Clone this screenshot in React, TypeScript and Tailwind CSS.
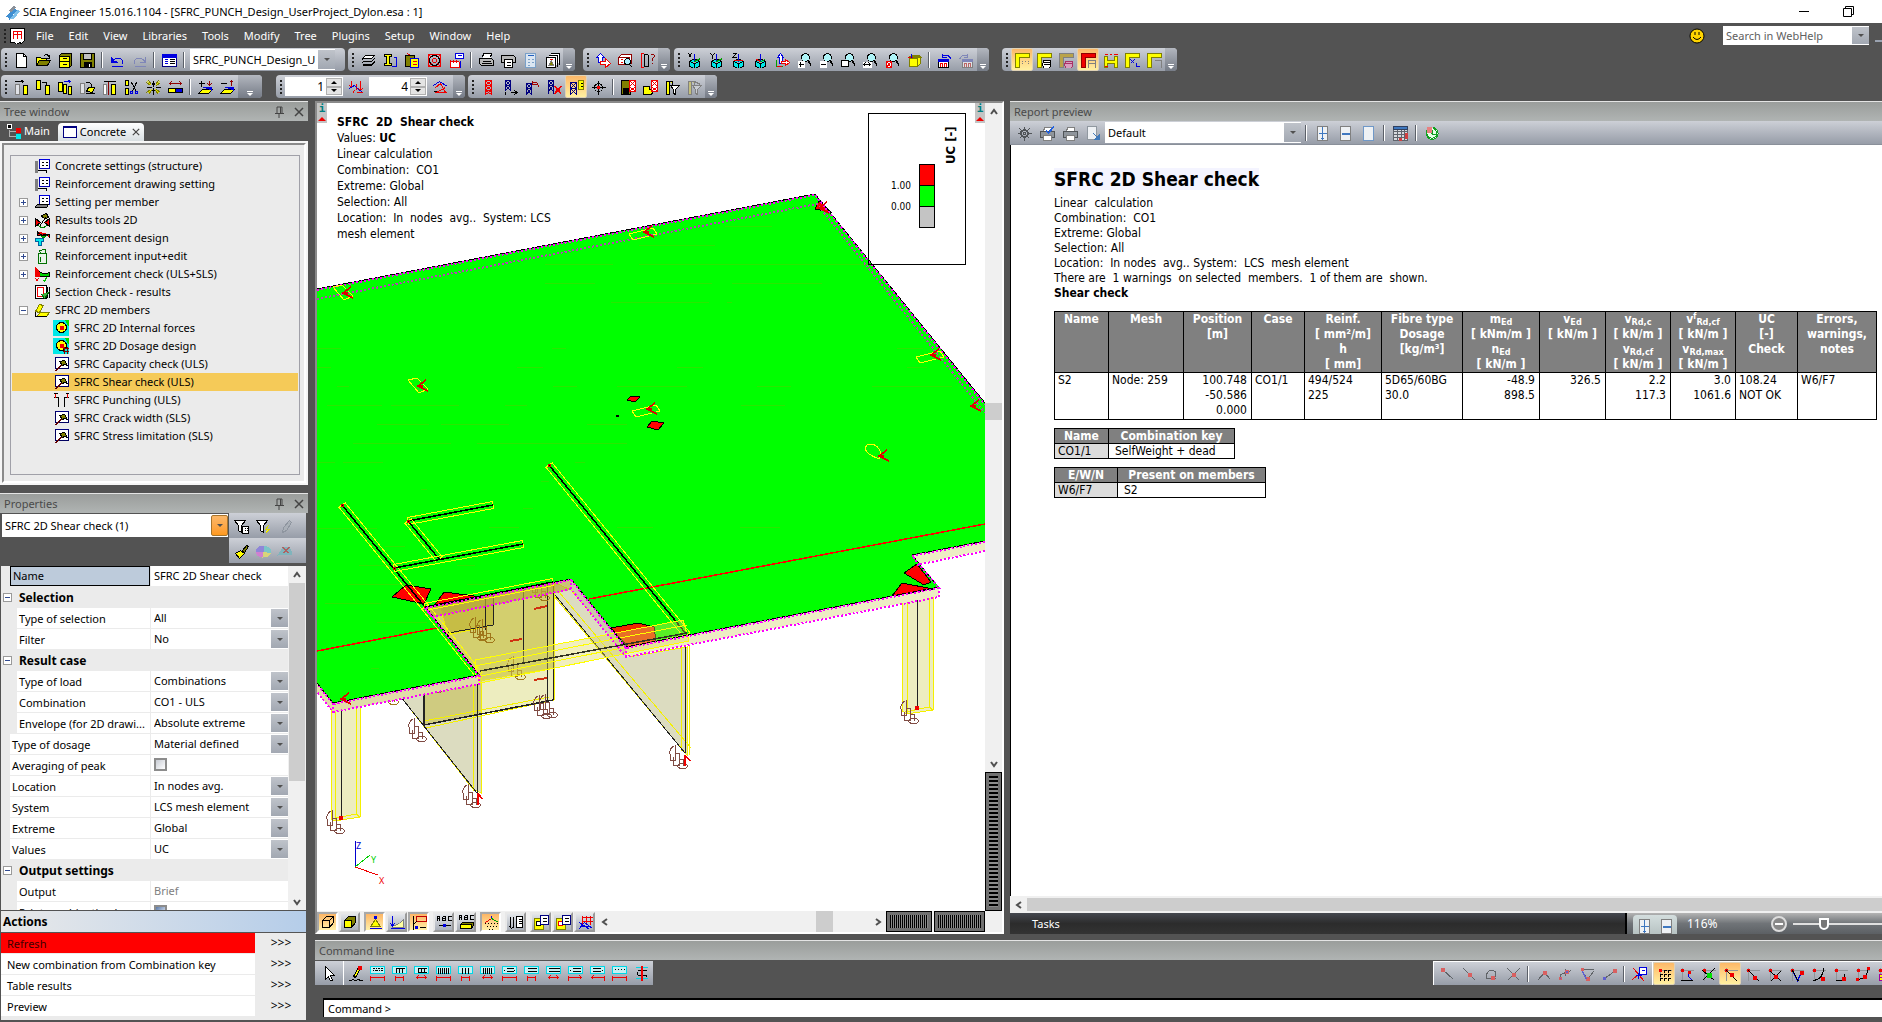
import { useState } from 'react';
import type { ReactNode } from 'react';

// Each icon is a list of [path, stroke, fill] on a 16x16 grid
type Shape = [string, string, string?];

const K = '#000';
const R = '#f00000';
const B = '#0000e0';
const Y = '#ffff00';
const C = '#00e8e8';
const O = '#808000';
const G = '#808080';
const W = '#fff';

const SHEETS = 'M2 6h9l3-3H5zM2 9h9l3-3M2 12h9l3-3M2 6v1M2 9v1';
const CUBE = 'M8 6l5 3v5l-5 2-5-2V9zM3 9l5 2 5-2M8 11v5';
const LENS = 'M5 5a4 4 0 1 0 8 0a4 4 0 1 0-8 0';
const HANDLE = 'M11 8l4 6M12 8l3 5';
const TRUSS = 'M5 1v14M11 1v14M5 1h6M5 6h6M5 11h6M5 1l6 5M11 1l-6 5M5 6l6 5M11 6l-6 5M5 11l6 4M11 11l-6 4';
const FRAME = 'M1 15V1h14v4H5v10z';

const ICONS: Record<string, Shape[]> = {
  app: [['M2 12L9 3l3 3-7 9z', 'none', '#3f8fd2'], ['M6 14l7-9 2 2-6 8z', 'none', '#7fc0ea'], ['M4 6l5-5 2 2-5 5z', 'none', '#8a9099']],
  doc: [['M1 0h14v12l-3 3-2-1-3 2-2-2H1z', K, W], ['M4 10V3h4v7M8 3h4v7M4 6h8', R]],
  new: [['M3 1h7l3 3v11H3z', K, W], ['M10 1v3h3', K]],
  open: [['M1 13V5h4l1 1h5v3', K, Y], ['M1 13l3-5h11l-3 5z', K, O], ['M9 3q3-2 4 1l1-1v3h-3', K]],
  cabinet: [['M2 3l2-2h10v12l-2 2H2z', K, O], ['M2 4h10v5H2zM2 9h10v6H2z', K, Y], ['M5 6h4M5 12h4', K]],
  save: [['M1 1h14v14H1z', K, O], ['M4 1h8v6H4z', K, '#c0c0c0'], ['M5 10h7v5H5z', K, K], ['M10 11v3', W]],
  undo: [['M2 4v6h6M2 10q4-6 9-4q4 3 1 6', B], ['M3 5v4h4', B], ['M2 14h11', B]],
  redo: [['M14 4v6H8M14 10q-4-6-9-4q-4 3-1 6', '#7f86b8'], ['M3 14h11', '#7f86b8']],
  form: [['M1 2h14v12H1z', '#000080', W], ['M1 2h14v3H1z', B, B], ['M3 7h3M3 9h3M3 11h3', B], ['M8 7h5M8 9h5M8 11h5', K]],
  sheets: [['M2 6h9l3-3H5z', K, W], [SHEETS, K], ['M2 13h9l3-3', K]],
  beam: [['M2 2h7v2H7v7h2v2H2v-2h2V4H2z', K, Y], ['M11 5h3v9h-5', B]],
  paste: [['M1 3h9v11H1z', K, O], ['M6 6h8v9H6z', B, Y], ['M3 1l3 2M8 9h4M8 12h4', R]],
  coil: [['M2 2h12v12H2z', R], ['M3 8a5 5 0 1 0 10 0a5 5 0 1 0-10 0', K], ['M6 8a2 2 0 1 0 4 0a2 2 0 1 0-4 0', R], ['M2 2l3 3M14 2l-3 3M2 14l3-3M14 14l-3-3', R]],
  mill: [['M7 1h8v5H7z', B, W], ['M2 15V8l3 2V8l3 2V8l3 2v5z', R, W], ['M9 3h4M12 8v7', B]],
  print: [['M4 5l1-4h8l-1 4', K, W], ['M1 6h12l2 2v5H3l-2-2z', K, '#b8b8b8'], ['M3 11h10M4 9h8', K]],
  plot: [['M1 3h12l2 2v5H1z', K, '#b8b8b8'], ['M4 7h8v8H4z', K, W], ['M6 10h4M6 13h4', K]],
  calc: [['M3 1h10v14H3z', '#7aa0c8', '#dbe6f2'], ['M5 3h6', '#2060c0'], ['M5 7h2M9 7h2M5 10h2M9 10h2M5 13h2', '#7aa0c8']],
  gallery: [['M6 1h9v11', K, W], ['M4 3h9v11', K, W], ['M2 5h9v10H2z', K, W], ['M4 13l3-5 2 5z', G, O], ['M5 7h3', R]],
  arrows: [['M5 1l4 4H7v5H3V5H1z', B, W], ['M5 9h5V6l5 5-5 4v-3H5z', R, W]],
  caseFind: [['M1 5l3-3h10v9H1z', '#900000', W], ['M1 5h11v7H1z', '#900000', W], ['M3 7h2M7 7h2M3 10h2', R], ['M7 9a3 3 0 1 0 6 0a3 3 0 1 0-6 0', K, '#aef'], ['M12 12l3 3', K]],
  measure: [['M2 1v14M1 1h3M1 15h3', R], ['M8 2H5v12h3M9 2v12', K], ['M11 3q3-3 4 0q0 2-2 3v2M13 10v1', '#900000']],
  cubeX: [[CUBE, K, C], ['M2 1l3 4M5 1L2 5', K], ['M8 1v8', B], ['M8 9l6-3', '#00a000']],
  cubeY: [[CUBE, K, C], ['M2 1l2 2 2-2M4 3v3', K], ['M8 1v8', B], ['M8 9l6-3', '#00a000']],
  cubeZ: [[CUBE, K, C], ['M2 1h4L2 5h4', K], ['M8 1v8', B], ['M3 8h9', R]],
  cubeA: [[CUBE, K, C], ['M8 1v8', B], ['M8 9l5-2', '#00a000'], ['M8 9L4 7', R]],
  ucs: [['M6 1l3 4H8v6H5V5H3z', B, W], ['M7 9h4V7l4 3-4 3v-2H7z', R, W], ['M2 7v7h6', '#00a000'], ['M2 14h5', R]],
  zoomIn: [[LENS, K, '#aef4f8'], [HANDLE, K], ['M1 8h7v7H1z', 'none', W], ['M2 12h5M4 9v5', K]],
  zoomOut: [[LENS, K, '#aef4f8'], [HANDLE, K], ['M1 8h7v7H1z', 'none', W], ['M2 12h5', K]],
  zoomWin: [[LENS, K, '#aef4f8'], [HANDLE, K], ['M1 8h7v6H1z', K, W]],
  zoomAll: [[LENS, K, '#aef4f8'], [HANDLE, K], ['M0 9h9v6H0z', 'none', W], ['M1 12h7M3 10l-2 2 2 2M6 10l2 2-2 2', K]],
  zoomSel: [[LENS, K, '#aef4f8'], [HANDLE, K], ['M2 9h5v6H2zM2 9l5 6M7 9l-5 6', R, W]],
  light: [['M3 6h8v8H3zM11 6l3-2v7l-3 3', O, Y], ['M2 5h13l-2-2H6z', O, O], ['M1 5h5', R], ['M5 1v4', B]],
  viewUndo: [['M2 7h10v8H2z', K, W], ['M2 7h10v2H2z', B, B], ['M4 14v-3h2v3M8 14v-3h2v3', R], ['M6 4q5-4 9 3M6 1v4h4', B]],
  viewRedo: [['M4 7h10v8H4z', G, '#dfe1e6'], ['M4 7h10v2H4z', '#7f86b8', '#7f86b8'], ['M6 14v-3h2v3M10 14v-3h2v3', '#b66'], ['M9 4q-5-4-8 3M9 1v4H5', '#7f86b8']],
  frame1: [[FRAME, O, Y], ['M7 9h1M10 9h1M13 9h1M7 11h1M13 11h1', G]],
  frame2: [[FRAME, O, Y], ['M7 8h7v6l-2 2H8l-2-3z', K, W], ['M7 10h6M7 12h6', K]],
  frame3: [[FRAME, G, '#b9a34a'], ['M7 9h7v5l-2 2H8l-2-3z', '#a36', '#d8a0c0'], ['M7 11h6', '#a36']],
  frame4: [[FRAME, '#900000', R], ['M8 15V8h7v7M8 11h7', G]],
  frame5: [['M2 15V4h3v4h7V4h3v11h-3v-4H5v4z', O, Y], ['M2 2h3M7 2h2M11 2h4M2 14h3', R]],
  frame6: [[FRAME, O, Y], ['M6 7l4 4M10 7l-4 4M12 10v4h3', B]],
  frame7: [[FRAME, O, Y], ['M8 8h7v7', G]],
  copyMove: [['M2 5h4v10H2z', G, '#dfe1e6'], ['M10 6h4v9h-4z', K, Y], ['M1 2h9M8 1l2 1-2 2', K]],
  copyMulti: [['M1 1h4v9H1z', K, Y], ['M10 6h4v9h-4z', K, Y], ['M6 3h5v3', K]],
  copyBlue: [['M1 3h4v9H1z', K, Y], ['M6 5h3v9H6zM11 7h3v8h-3z', K, Y], ['M6 2h7M11 1l2 1-2 2', B]],
  rotate: [['M1 4h4v10H1z', G, '#dfe1e6'], ['M7 12l2-4h6l-2 5z', K, Y], ['M7 3q5-1 5 4M6 14h9', K]],
  mirror: [['M2 5h3v10H2z', G, W], ['M10 5h4v10h-4z', K, Y], ['M7 1v14', '#900000'], ['M2 2h12', K]],
  cut: [['M2 1h3v5H2zM2 9h3v6H2z', K, Y], ['M8 3l5 9M13 3l-4 9', K], ['M7 12h2v2H7zM12 12h2v2h-2z', B]],
  explode: [['M3 1l3 4M13 1l-3 4M3 15l3-4M13 15l-3-4M1 3l4 3M15 3l-4 3M1 13l4-3M15 13l-4-3', O], ['M8 1v5M8 10v5M1 8h5M10 8h5M7 4l1 2 1-2M7 12l1-2 1 2', K], ['M2 2l4 4M14 2l-4 4M2 14l4-4M14 14l-4-4', '#e8e800']],
  stretch: [['M1 9h14v4H1z', K, Y], ['M8 9h7v4H8z', K, B], ['M2 4h12M4 2L2 4l2 2M12 2l2 2-2 2', '#900000']],
  layAdd: [['M1 14l4-4h10l-4 4z', K, Y], ['M5 8h9v3', B, B], ['M4 1v6M1 4h6', K], ['M12 1v5M10 4l2 2 2-2', '#900000']],
  laySub: [['M1 14l4-4h10l-4 4z', K, Y], ['M5 8h9v3', B, B], ['M1 4h6', K], ['M12 1v5M10 3l2-2 2 2', '#900000']],
  dimA: [['M3 1v7M1 6l2 2 2-2M8 4v6M12 1v10M10 9l2 2 2-2', R], ['M1 9l5-3 5 5 3 1', B], ['M8 13h6M4 14l2-3', R]],
  dimB: [['M1 6l6-4 8 5', B], ['M3 8l5-4 5 9M13 8L4 13h10', R], ['M1 12h3', K]],
  truss: [[TRUSS, R, W]],
  trussL: [['M3 1v10M8 1v10M3 1h5M3 6h5M3 1l5 5M8 1L3 6M3 6l5 5M8 6l-5 5', '#000080', W], ['M8 13h6M12 11l3 2-3 2M3 12v3', K]],
  trussU: [['M2 4v11M7 4v11M2 4h5M2 9h5M2 4l5 5M7 4L2 9M2 9l5 6M7 9l-5 6', '#000080', W], ['M8 4q5-4 6 4M8 1v4h4', '#a00000']],
  trussX: [['M2 1v13M7 1v13M2 1h5M2 6h5M2 1l5 5M7 1L2 6M2 6l5 6M7 6l-5 6', '#000080', W], ['M8 7l7 8M15 7l-7 8M9 7l6 7M14 7l-7 8', R]],
  trussY: [['M2 3v12M8 3v12M2 3h6M2 9h6M2 3l6 6M8 3L2 9M2 9l6 6M8 9l-6 6', '#000080', W], ['M10 1h5v9h-5z', O, Y], ['M12 4h2M12 7h2', K]],
  target: [['M8 1v14M1 8h14', K], ['M4 8a4 4 0 1 0 8 0a4 4 0 1 0-8 0', K], ['M7 7h2v2H7z', R, R]],
  saveR: [['M1 1h9v14H1z', K, O], ['M3 9h5v6H3z', K, K], ['M9 1h6v11H9zM9 1l6 6M15 1L9 7M9 7l6 5M15 7l-6 5', R, W]],
  openR: [['M1 14V7h6v3h5l-3 5H1z', K, Y], ['M9 1h6v11H9zM9 1l6 6M15 1L9 7M9 7l6 5M15 7l-6 5', R, W]],
  filtA: [['M2 15V2h3v13zM5 2h3v3', K, Y], ['M6 6h9l-4 4v5l-2-1v-4z', K, W]],
  filtB: [['M2 15V2h3v13zM5 2h3v3', G, '#c4bf7a'], ['M6 6h9l-4 4v5l-2-1v-4z', G, '#c8ccd2'], ['M8 2l6 3', G]],
  treeMain: [['M1 1h4v4H1z', W, K], ['M3 6v7h6M3 8h6', '#b0b0b0'], ['M10 5h4v4h-4z', R, R], ['M10 11h4v4h-4z', C, C]],
  win: [['M1 2h13v11H1z', '#000080', W], ['M1 2h13v1H1z', '#000080', '#000080']],
  cfg: [['M1 3h2v11H1z', G, G], ['M5 1h10v9H5z', '#0000b0', W], ['M5 1h10', B], ['M7 4h2M11 4h2M7 7h2M11 7h2', K], ['M3 12h9v2', K]],
  cfg2: [['M5 1h10v9H5z', '#0000b0', W], ['M5 1h10', B], ['M7 4h2M11 4h2M7 7h2M11 7h2', K], ['M1 12l2-2h11l-2 3H1z', K, G]],
  tools2d: [['M1 6v8l5-4z', K, R], ['M15 6v8l-5-4z', K, R], ['M5 14l6-9M7 3l5-2 2 4-3 1-3-1z', K, O], ['M4 13q4 4 8 0', '#008000']],
  design: [['M3 1v4l12-1v3M3 1q4 6 12 3', K, R], ['M6 5q3 4 6 0', '#008000', '#00c000'], ['M1 8h8v3H7v4H4v-4H1z', '#0060a0', C]],
  input: [['M4 5h8v10H4zM6 5l-1-3 6-1v4M6 8v5', '#007000', '#e8f4e8']],
  check: [['M1 1v9h14V6Q8 10 1 1', K, '#00d000'], ['M1 1v9h4V6z', R, R], ['M1 12l3 3M4 12l-3 3', R], ['M9 14l1 1 2-4', '#00c000']],
  section: [['M1 1h11v13H1z', K, W], ['M3 3h6v9H3z', R], ['M13 2v11M15 2v11', K], ['M7 10l3 4 5-7', '#006000', '#40b040']],
  folder: [['M1 9l4-7 4 1-4 7z', O, Y], ['M2 14l4-4h9l-3 4z', O, Y], ['M1 9v5h11', K]],
  forces: [['M0 0h15v15H0z', C, C], ['M12 0h3v5z', '#00e000', '#00e000'], ['M3 7a5 5 0 1 0 10 0a5 5 0 1 0-10 0', K, Y], ['M7 6h3v3H7z', R, R]],
  dosage: [['M0 0h15v15H0z', C, C], ['M12 0h3v5z', '#00e000', '#00e000'], ['M3 7a5 5 0 1 0 10 0a5 5 0 1 0-10 0', K, Y], ['M7 6h3v3H7z', R, R], ['M9 10h6M9 13h6M11 8v7M14 8v7', '#800000']],
  hammer: [['M2 1h13v11H2z', '#000060', W], ['M2 1h13', '#000080'], ['M1 15l8-8M2 15l7-7', '#600000'], ['M6 5l5-1 3 5-3-1-2 1z', K, O]],
  punch: [['M0 1h4M12 1h4M0 5h5v9M16 5h-5v9', K], ['M2 1v4M14 1v4', R]],
  funnelT: [['M1 2h11L8 7v7l-3-2V7z', K, W], ['M9 8h6v7H9z', K, W], ['M11 10h1M13 10h1M11 12h1M13 12h1', K]],
  funnelF: [['M1 2h11L8 7v7l-3-2V7z', K, W], ['M13 7l-3 4h4l-4 4', '#d8d800', Y]],
  pencil: [['M5 14l1-5 6-7 2 2-5 8z', '#8e959f', '#aab0b8']],
  brush: [['M9 7l4-5 2 1-4 6z', K, O], ['M2 10l5-3 4 3-5 5z', K, Y]],
  pie: [['M0 8a8 6 0 0 1 8-6v6z', 'none', '#8f86d8'], ['M8 2a8 6 0 0 1 7 8L8 8z', 'none', '#7cc4c8'], ['M8 8l7 2a8 6 0 0 1-8 4z', 'none', '#d8d47a'], ['M8 8l-1 6A8 6 0 0 1 0 8z', 'none', '#d080d0']],
  pieX: [['M0 12q4-9 10-9q5 3 5 8z', 'none', '#80b4bc'], ['M5 4l6 6M11 4l-6 6M6 4l6 6M12 4l-6 6', '#b06060']],
  box: [['M2 6l4-4h7v6l-4 5H2zM2 6h7v7M9 6l4-4', K]],
  boxY: [['M2 6l4-4h7v6l-4 5H2z', K, O], ['M2 6h7v7H2z', K, Y]],
  supp: [['M8 5l5 7H3z', O, Y], ['M7 2h2v2H7z', B, B], ['M2 14h12', B]],
  load: [['M3 1v10M1 9l2 3 2-3', B], ['M2 13h12V5l-4 4-5 2', G, '#ffffa0'], ['M1 14h14', B]],
  label: [['M5 2h10v5H5z', '#c00000'], ['M2 1v14M5 7l-3 3', K], ['M4 12h2v2H4z', B, B], ['M8 13h6', K]],
  node: [['M1 6V2h2v4M1 4h2M6 2v4h3V2H6M6 4h3M15 2h-3v4h3', K], ['M2 11h12', K], ['M7 10h2v2H7z', B, B]],
  member: [['M1 5V1h2v4M1 3h2M6 1v4h3V1H6M6 3h3M15 1h-3v4h3', K], ['M2 10l2-2h11v3l-2 3H2z', K, O], ['M2 10h11v4H2z', K, Y]],
  dots: [['M8 1v3', B], ['M8 4L2 8', R], ['M8 4l7 4', '#00a000'], ['M1 9h1M4 9h1M7 9h1M10 9h1M13 9h1M3 12h1M6 12h1M9 12h1M12 12h1M5 15h1M8 15h1', K]],
  list: [['M2 2v11M5 2v11M1 12l2 2 2-2', K], ['M8 2h6v11H8z', K, W], ['M10 5h3M10 7h3M10 9h3', K]],
  winY: [['M1 4h9v11H1z', O, Y], ['M3 7h4v4H3z', K, W], ['M7 1h8v9H7z', '#000080', W], ['M9 4h4M9 7h4', K]],
  winR: [['M1 4h9v11H1z', O, Y], ['M3 7h4v4H3z', R, W], ['M7 1h8v9H7z', '#000080', W], ['M9 4h4M9 7h4', K]],
  meshR: [['M5 1v9M9 1v9M13 1v9M4 3h12M4 7h12', R], ['M1 15l6-7 8 6M2 8l10 7M4 12h9', B]],
  pointer: [['M5 1v13l3-3 2 5 2-1-2-5h4z', K, W]],
  edit: [['M6 11l5-9 2 1-5 9z', K, Y], ['M11 1h3v3h-3z', R, R], ['M1 15h3M5 14l3 1 3-1 2 1h2', K]],
  gear: [['M4 8a4 4 0 1 0 8 0a4 4 0 1 0-8 0M5 8a3 3 0 1 0 6 0a3 3 0 1 0-6 0', '#505458'], ['M7 8a1 1 0 1 0 2 0a1 1 0 1 0-2 0', '#505458'], ['M8 1v3M8 12v3M1 8h3M12 8h3M3 3l2 2M11 11l2 2M13 3l-2 2M5 11l-2 2', '#505458']],
  printB: [['M4 6l1-4h7v4', G, W], ['M1 6h14v6H1z', '#505458', '#8f959c'], ['M4 10h8v5H4z', G, W], ['M7 5l2 2 5-6M7 6l2 2 5-6', '#2060e0']],
  printG: [['M4 6l1-4h7v4', G, W], ['M1 6h14v6H1z', '#505458', '#8f959c'], ['M4 10h8v5H4z', G, W]],
  export: [['M2 1h9v13H2z', '#9098a0', '#eef1f4'], ['M8 8l5 5M14 9v5H9z', '#3f78b8', '#3f78b8']],
  fitAll: [['M3 1h10v14H3z', G, '#eef1f4'], ['M8 2v12M4 8h8M7 3l1-1 1 1M7 13l1 1 1-1', '#3f78c0']],
  fitW: [['M3 1h10v14H3z', G, '#eef1f4'], ['M4 8h8M4 9h8', '#3f78c0']],
  page: [['M3 1h10v14H3z', '#6f98c8', '#eef1f4']],
  tableI: [['M1 1h14v14H1zM1 6h14M1 9h14M1 12h14M5 4v11M9 4v11M12 4v11', '#60646c', '#d8dade'], ['M1 1h14v3H1z', '#304060', '#3f78c0'], ['M12 7h3v6h-3zM6 12h3v3H6z', 'none', '#d04040']],
  refresh: [['M3 4a6 6 0 1 0 6-2M4 4a5 5 0 1 0 5-1', '#10a020', '#e8ffe8'], ['M8 4v5h5M8 9l-2-3', '#10a020'], ['M2 1h5v6H2z', 'none', '#e88080']],
};

const RED_FADED = '#d86060';
const SNAPS: Shape[][] = [
  [['M3 3l11 10', '#606468'], ['M2 2h3v3H2z', RED_FADED, RED_FADED]],
  [['M2 2l12 12', '#606468'], ['M7 7h3v3H7z', RED_FADED, RED_FADED]],
  [['M12 12H3V8q2-6 9-3v5', '#606468'], ['M8 10h3v3H8z', RED_FADED, RED_FADED]],
  [['M2 2l12 12M14 2L2 14', '#606468'], ['M7 7h3v3H7z', RED_FADED, RED_FADED]],
];
const SNAPS2: Shape[][] = [
  [['M2 14l7-8 6 7', '#606468'], ['M8 5h3v3H8z', RED_FADED, RED_FADED]],
  [['M3 12V8l11-4M8 2v7', '#606468'], ['M8 4h3v3H8zM2 11h2v2H2z', RED_FADED, '#6060d0']],
  [['M2 3h12M2 3l6 10 6-8', '#606468'], ['M2 2h2v2H2zM7 11h3v3H7z', RED_FADED, RED_FADED], ['M3 5l4 8', '#6060d0']],
  [['M3 12l10-7', '#606468'], ['M2 11h2v2H2z', '#6060d0', '#6060d0'], ['M12 3h3v3h-3z', RED_FADED, RED_FADED]],
];
const SNAP_SET: Shape[] = [['M2 2l11 13M1 13l7-6', R], ['M8 1h7v7H8z', B, W], ['M10 4h3M7 6v6M4 9h6', B]];
const AXIS: Shape = ['M4 1v13M1 4h14', '#909498'];
const NODE: Shape = ['M3 3h2v2H3z', R, R];
const SNAPS3: Shape[][] = [
  [['M2 4h14M4 2v12', '#909498'], NODE, ['M7 4h3M11 4h3M3 8h3M7 8h3M11 8h3M3 12h3M7 12h3M11 12h3M8 3v3M12 3v3M4 7v3M8 7v3M12 7v3M4 11v3M8 11v3M12 11v3', K]],
  [AXIS, NODE, ['M2 14h12', K], ['M10 6v4l4 4', B], ['M10 5h2v2h-2z', R, R]],
  [AXIS, NODE, ['M2 14L14 2M2 4l12 10', K], ['M7 7h4v4H7z', '#00e000', '#00e000']],
  [AXIS, NODE, ['M4 4l11 11', K], ['M8 7h3v3H8z', R, R]],
  [AXIS, NODE, ['M4 4l11 11', K], ['M9 10h3v3H9z', R, R]],
  [AXIS, NODE, ['M4 5l11 10M14 5L4 15', K], ['M8 9h3v3H8z', R, R]],
  [AXIS, NODE, ['M5 6l4 8 4-8', B], ['M12 5h3v3h-3z', R, R], ['M4 4l6 11', K]],
  [AXIS, NODE, ['M13 1q0 12-10 13', K], ['M11 11h3v3h-3z', R, R]],
  [AXIS, NODE, ['M3 14h9V7', K], ['M10 11h3v3h-3z', R, R]],
  [AXIS, NODE, ['M3 13q9 0 11-11', K], ['M2 12h2v2H2zM9 9h3v3H9zM13 1h2v2h-2z', R, R]],
  [AXIS, NODE, ['M3 8h11v6H3zM3 11h11', '#a000a0', Y]],
];

const DIMS: Shape[][] = [
  ['M3 3h2M6 3h1M8 3h2M11 3h2M3 5h1M5 5h3M9 5h1M11 5h2', 'M1 10v5M15 10v5M1 12h14'],
  ['M5 3v4M8 3v4M11 3v4M4 3h9', 'M4 10v5M12 10v5M4 12h8'],
  ['M5 3v4M8 3v4M11 3v4M4 3h9M4 7h9', 'M3 12h10M5 10l-2 2 2 2M11 10l2 2-2 2'],
  ['M3 2v6M5 2v6M7 2v6M9 2v6M11 2v6M13 2v6', 'M1 10v5M15 10v5M1 12h14'],
  ['M5 2v6M8 2v6M11 2v6', 'M4 10v5M12 10v5M4 12h8'],
  ['M4 2v6M6 2v6M8 2v6M10 2v6M12 2v6', 'M3 12h10M5 10l-2 2 2 2M11 10l2 2-2 2'],
  ['M5 3h7M5 6h7M3 4v1M13 4v1', 'M1 10v5M15 10v5M1 12h14'],
  ['M4 3h9M4 6h9', 'M4 10v5M12 10v5M4 12h8'],
  ['M3 3h11M3 6h11', 'M3 12h10M5 10l-2 2 2 2M11 10l2 2-2 2'],
  ['M5 3h8M5 6h8M3 4v1', 'M1 10v5M1 12h13M12 10l2 2-2 2'],
  ['M3 3h8M3 6h8M13 4v1', 'M15 10v5M2 12h13M4 10l-2 2 2 2'],
  ['M3 4h1M6 4h1M9 4h1M12 4h1', 'M1 10v5M15 10v5M1 12h14'],
].map(([a, b]) => [['M1 1h14v7H1z', '#00d8e8', '#c8f0f2'], [a, K], [b, R]] as Shape[]);
DIMS.push([['M2 2h12M2 13h12', '#00d8e8'], ['M4 5h9M4 10h9M4 6v3M12 10l2 2', K], ['M8 0v16M9 0v16', R]]);

function Icon({ shapes }: { shapes: Shape[] }) {
  return (
    <svg viewBox="-0.5 -0.5 16 16" fill="none" shapeRendering="crispEdges" aria-hidden="true" className="w-4 h-4 shrink-0">
      {shapes.map(([d, stroke, fill], i) => (
        <path key={i} d={d} stroke={stroke} fill={fill || 'none'} strokeWidth="1" />
      ))}
    </svg>
  );
}

function ToolButton({ shapes, label, on = false }: { shapes: Shape[]; label: string; on?: boolean }) {
  return (
    <button
      type="button"
      aria-label={label}
      className={`w-[22px] h-full flex items-center justify-center shrink-0 ${
        on ? 'rounded-xs border border-[#e0d2b4] bg-linear-to-b from-[#fcb868] to-[#fff0a0]' : ''
      }`}
    >
      <Icon shapes={shapes} />
    </button>
  );
}

function Grip() {
  return <span className="w-[9px] self-center h-3.5 shrink-0 pl-1"><span className="block w-0.5 h-full bg-[repeating-linear-gradient(#222_0_2px,transparent_2px_4px)]" /></span>;
}

function Sep() {
  return <span className="w-2 shrink-0 flex justify-center self-center h-4"><span className="w-px bg-[#5b6068]" /><span className="w-px bg-white" /></span>;
}

function Handle({ wide = false }: { wide?: boolean }) {
  return (
    <span className={`${wide ? 'w-6' : 'w-3'} h-full shrink-0 rounded-r-sm bg-linear-to-b from-[#b3b7bf] to-[#757b86] flex flex-col items-center justify-end pb-0.5`}>
      <span className="w-1.5 h-px bg-white mb-px" />
      <span className="border-x-[3px] border-x-transparent border-t-[3px] border-t-white" />
    </span>
  );
}

// "|" is a separator, a leading "*" is a pressed button
function Tools({ names }: { names: string }) {
  return (
    <>
      {names.split(' ').map((n, i) =>
        n === '|' ? <Sep key={i} /> : (
          <ToolButton key={i} shapes={ICONS[n.replace('*', '')]} label={n.replace('*', '')} on={n.startsWith('*')} />
        )
      )}
    </>
  );
}

function Bar({ children, handle = true, wide = false }: { children: ReactNode; handle?: boolean; wide?: boolean }) {
  return (
    <div className="h-[23px] flex items-center rounded-sm bg-linear-to-b from-[#cdd0d7] to-[#979da8] shrink-0">
      <Grip />
      {children}
      {handle && <Handle wide={wide} />}
    </div>
  );
}

function Select({ label, options, tone = 'gray', className = '' }: { label: string; options: string[]; tone?: string; className?: string }) {
  return (
    <span className={`relative flex bg-white ${className}`}>
      <select aria-label={label} className="appearance-none w-full h-full pl-[3px] pr-5 bg-transparent outline-none">
        {options.map(o => <option key={o}>{o}</option>)}
      </select>
      <span
        className={`pointer-events-none absolute right-0 inset-y-px w-[17px] flex items-center justify-center ${
          tone === 'orange' ? 'rounded-xs border border-[#a8752c] bg-linear-to-b from-[#fbb768] to-[#ff9a1c]' : 'bg-linear-to-b from-[#bfc3ca] to-[#a2a8b2]'
        }`}
      >
        <span className="border-x-[3px] border-x-transparent border-t-[3px] border-t-[#505050]" />
      </span>
    </span>
  );
}

function Spin({ label, value }: { label: string; value: string }) {
  const [v, setV] = useState(value);
  return (
    <span className="flex h-[19px] w-[58px] bg-white shrink-0">
      <input aria-label={label} value={v} onChange={e => setV(e.target.value)} className="w-[41px] pr-0.5 text-right text-[12px] outline-none" />
      <span className="flex flex-col w-4 my-px">
        <button type="button" aria-label={`${label} up`} onClick={() => setV(String(Number(v) + 1))} className="flex-1 bg-[#e4e4e4] border border-[#b0b0b0] flex items-center justify-center">
          <span className="border-x-[3px] border-x-transparent border-b-[3px] border-b-black" />
        </button>
        <button type="button" aria-label={`${label} down`} onClick={() => setV(String(Number(v) - 1))} className="flex-1 bg-[#e4e4e4] border border-[#b0b0b0] flex items-center justify-center">
          <span className="border-x-[3px] border-x-transparent border-t-[3px] border-t-black" />
        </button>
      </span>
    </span>
  );
}

function PanelHeader({ title, tools = true }: { title: string; tools?: boolean }) {
  return (
    <div className="h-5 shrink-0 flex items-center pl-1 pr-1 border-t border-[#e4e4e4] bg-linear-to-b from-[#9a9d9b] to-[#b0b4b3] text-[#4a4a4a]">
      <h2 className="flex-1">{title}</h2>
      {tools && (
        <>
          <button type="button" aria-label="Pin" className="w-3">
            <svg viewBox="0 0 10 12" fill="none" stroke="#444" className="w-2.5 h-3"><path d="M3 1h5v6M3 1v6M6.500 1v6M1 7.500h9M5 8v4" /></svg>
          </button>
          <button type="button" aria-label="Close" className="w-2.5 ml-2">
            <svg viewBox="0 0 10 10" fill="none" stroke="#444" strokeWidth="1.500" className="w-2.5 h-2.5"><path d="M1 1l8 8M9 1L1 9" /></svg>
          </button>
        </>
      )}
    </div>
  );
}

const MENU = ['File', 'Edit', 'View', 'Libraries', 'Tools', 'Modify', 'Tree', 'Plugins', 'Setup', 'Window', 'Help'];

const TREE: [string, string, string?][] = [
  ['Concrete settings (structure)', 'cfg'],
  ['Reinforcement drawing setting', 'cfg'],
  ['Setting per member', 'cfg2', '+'],
  ['Results tools 2D', 'tools2d', '+'],
  ['Reinforcement design', 'design', '+'],
  ['Reinforcement input+edit', 'input', '+'],
  ['Reinforcement check (ULS+SLS)', 'check', '+'],
  ['Section Check - results', 'section'],
  ['SFRC 2D members', 'folder', '-'],
];

const TREE_SUB: [string, string][] = [
  ['SFRC 2D Internal forces', 'forces'],
  ['SFRC 2D Dosage design', 'dosage'],
  ['SFRC Capacity check (ULS)', 'hammer'],
  ['SFRC Shear check (ULS)', 'hammer'],
  ['SFRC Punching (ULS)', 'punch'],
  ['SFRC Crack width (SLS)', 'hammer'],
  ['SFRC Stress limitation (SLS)', 'hammer'],
];

function Expander({ open }: { open: boolean }) {
  return (
    <span className="w-[9px] h-[9px] shrink-0 bg-white border border-[#9a9a9a] flex items-center justify-center relative">
      <span className="w-[5px] h-px bg-[#304a90]" />
      {!open && <span className="absolute w-px h-[5px] bg-[#304a90]" />}
    </span>
  );
}

function TreePanel() {
  const [active, setActive] = useState('SFRC Shear check (ULS)');
  return (
    <section className="flex flex-col shrink-0">
      <PanelHeader title="Tree window" />
      <div className="h-5 flex items-end text-white">
        <button type="button" className="h-full flex items-center gap-0.5 pl-1.5 pr-2"><Icon shapes={ICONS.treeMain} />Main</button>
        <button type="button" className="h-[18px] flex items-center gap-0.5 px-1 rounded-t-sm bg-linear-to-b from-white to-[#d8dfe2] text-black">
          <Icon shapes={ICONS.win} />Concrete
          <svg viewBox="0 0 10 10" stroke="#444" strokeWidth="1.500" className="w-2 h-2 ml-1"><path d="M1 1l8 8M9 1L1 9" /></svg>
        </button>
      </div>
      <div className="border-2 border-[#f6f6f6] bg-[#ebebeb]">
        <div className="border-2 border-[#8a8a8a] border-r-white border-b-white pt-2.5 pl-1.5 pr-1 pb-1.5">
          <ul className="h-[320px] border border-[#a0a0a8] pt-px px-px">
            {TREE.map(([text, icon, sign]) => (
              <li key={text} className="h-[18px] flex items-center pl-[7px]">
                {sign ? <Expander open={sign === '-'} /> : <span className="w-[9px]" />}
                <span className="w-[21px] ml-1.5 flex"><Icon shapes={ICONS[icon]} /></span>
                <span>{text}</span>
              </li>
            ))}
            {TREE_SUB.map(([text, icon]) => (
              <li key={text} onClick={() => setActive(text)} className={`h-[18px] flex items-center pl-[41px] ${text === active ? 'bg-[#f5ca58]' : ''}`}>
                <span className="w-[21px] flex"><Icon shapes={ICONS[icon]} /></span>
                <span>{text}</span>
              </li>
            ))}
          </ul>
        </div>
      </div>
    </section>
  );
}

type Prop = { label: string; value?: string; kind?: 'select' | 'check' | 'text' | 'muted' | 'group'; indent?: boolean };

const PROPS: Prop[] = [
  { label: 'Selection', kind: 'group' },
  { label: 'Type of selection', value: 'All', kind: 'select', indent: true },
  { label: 'Filter', value: 'No', kind: 'select', indent: true },
  { label: 'Result case', kind: 'group' },
  { label: 'Type of load', value: 'Combinations', kind: 'select', indent: true },
  { label: 'Combination', value: 'CO1 - ULS', kind: 'select', indent: true },
  { label: 'Envelope (for 2D drawi...', value: 'Absolute extreme', kind: 'select', indent: true },
  { label: 'Type of dosage', value: 'Material defined', kind: 'select' },
  { label: 'Averaging of peak', kind: 'check' },
  { label: 'Location', value: 'In nodes avg.', kind: 'select' },
  { label: 'System', value: 'LCS mesh element', kind: 'select' },
  { label: 'Extreme', value: 'Global', kind: 'select' },
  { label: 'Values', value: 'UC', kind: 'select' },
  { label: 'Output settings', kind: 'group' },
  { label: 'Output', value: 'Brief', kind: 'muted', indent: true },
  { label: 'Print combination key', value: 'on', kind: 'check', indent: true },
];

function PropRow({ row }: { row: Prop }) {
  if (row.kind === 'group') {
    return (
      <div className="h-[21px] flex items-center gap-[7px] pl-0.5 text-[12px] font-bold">
        <Expander open />
        {row.label}
      </div>
    );
  }
  return (
    <label className={`h-[21px] pb-px flex gap-px ${row.indent ? 'pl-4' : 'pl-[9px]'}`}>
      <span className="flex-1 min-w-0 bg-white pl-0.5 pt-[3px] whitespace-nowrap">{row.label}</span>
      <span className="w-[137px] bg-white flex">
        {row.kind === 'select' && <Select label={row.label} options={[row.value || '']} className="w-full" />}
        {row.kind === 'check' && <input type="checkbox" defaultChecked={row.value === 'on'} className="ml-[3px] mt-[3px] w-[13px] h-[13px] appearance-none border-2 border-[#8c8c8c] bg-linear-to-br from-[#c8ccd4] to-white checked:from-[#5878a8]" />}
        {row.kind === 'muted' && <span className="pl-[3px] pt-0.5 text-[#808080]">{row.value}</span>}
      </span>
    </label>
  );
}

function PropertiesPanel() {
  return (
    <section className="flex flex-col flex-1 min-h-0">
      <PanelHeader title="Properties" />
      <div className="flex items-start gap-px shrink-0 pl-0.5">
        <Select label="Selected item" options={['SFRC 2D Shear check (1)']} tone="orange" className="flex-1 h-[23px] mt-px" />
        <div className="w-[77px] mr-0.5">
          <div className="h-[25px] flex pl-px bg-linear-to-b from-[#cdd0d7] to-[#979da8]">
            {['funnelT', 'funnelF', 'pencil'].map(n => <ToolButton key={n} shapes={ICONS[n]} label={n} />)}
          </div>
          <div className="h-[25px] flex pl-px bg-linear-to-b from-[#cdd0d7] to-[#979da8]">
            {['brush', 'pie', 'pieX'].map(n => <ToolButton key={n} shapes={ICONS[n]} label={n} />)}
          </div>
        </div>
      </div>
      <div className="flex-1 min-h-0 mt-[3px] ml-px mr-0.5 flex bg-[#ebebeb] overflow-hidden">
        <div className="flex-1">
          <label className="h-[21px] pb-px pl-[9px] flex gap-px">
            <span className="flex-1 pl-0.5 pt-px border border-black bg-[#bdcbdb]">Name</span>
            <input defaultValue="SFRC 2D Shear check" className="w-[137px] pl-[3px] bg-white outline-none" />
          </label>
          {PROPS.map(row => <PropRow key={row.label} row={row} />)}
        </div>
        <div className="w-[18px] flex flex-col items-center bg-[#f0f0f0] shrink-0">
          <Chevron dir="up" />
          <span className="h-[198px] w-4 bg-[#cdcdcd]" />
          <span className="flex-1" />
          <Chevron dir="down" />
        </div>
      </div>
      <div className="ml-px mr-0.5 mt-px shrink-0 bg-[#ebebeb] pb-[3px]">
        <h2 className="h-[22px] flex items-center pl-0.5 text-[12px] font-bold bg-linear-to-r from-[#e9e9e9] to-[#b5cde9] border-b border-[#555]">Actions</h2>
        {['Refresh', 'New combination from Combination key', 'Table results', 'Preview'].map((a, i) => (
          <div key={a} className="h-[21px] pb-px flex">
            <span className={`flex-1 pl-1.5 pt-[3px] ${i === 0 ? 'bg-[#ff0000] text-[#400000]' : 'bg-white'}`}>{a}</span>
            <button type="button" aria-label={a} className="w-[50px] ml-px text-center bg-[#ebebeb] text-[12px]">&gt;&gt;&gt;</button>
          </div>
        ))}
      </div>
    </section>
  );
}

function Chevron({ dir }: { dir: 'up' | 'down' | 'left' | 'right' }) {
  const d = { up: 'M3 8l3-4 3 4', down: 'M3 4l3 4 3-4', left: 'M8 3L4 6l4 3', right: 'M4 3l4 3-4 3' }[dir];
  return (
    <span className="w-[17px] h-[17px] flex items-center justify-center shrink-0">
      <svg viewBox="0 0 12 12" fill="none" stroke="#505050" strokeWidth="2" className="w-3 h-3"><path d={d} /></svg>
    </span>
  );
}

const SLAB = '0,186 498,91 668,300 668,438 595,452 622,484 370,532 309,544 254,476 108,504 162,572 16,600 0,580';
const MARKS = [[26, 190], [327, 129], [614, 252], [101, 283], [330, 306], [562, 353], [654, 303], [502, 105], [24, 596]];
const SUPPORTS = [[22, 717], [158, 691], [104, 625], [229, 602], [365, 652], [596, 607], [235, 601]];
const SUPPORTS_BACK = [[165, 524], [172, 526], [203, 563], [76, 588], [120, 576], [227, 484]];
const STRIPS: [number, number, number, number][] = [
  [25, 402, 108, 504],
  [108, 504, 162, 572],
  [91, 418, 176, 402],
  [91, 418, 122, 456],
  [77, 465, 206, 441],
  [232, 362, 370, 532],
];

function Support({ x, y }: { x: number; y: number }) {
  return <path d={`M${x - 8} ${y - 9}q-5 3-4 8v6h5v-13v-2M${x - 7} ${y - 2}h4v12h-6v-8M${x - 3} ${y + 4}h4v7M${x - 5} ${y + 11}q6-6 11 0q-5 6-11 0`} />;
}

function Strip({ p: [x1, y1, x2, y2] }: { p: [number, number, number, number] }) {
  // offset the two side lines along the normal
  const len = Math.hypot(x2 - x1, y2 - y1);
  const dx = (-(y2 - y1) / len) * 4;
  const dy = ((x2 - x1) / len) * 3.500;
  return (
    <g fill="none">
      <path d={`M${x1 + dx} ${y1 + dy}L${x2 + dx} ${y2 + dy}L${x2 - dx} ${y2 - dy}L${x1 - dx} ${y1 - dy}z`} stroke="#ff0" />
      <path d={`M${x1} ${y1}L${x2} ${y2}`} stroke="#000" strokeWidth="1.500" />
      <path d={`M${x1 - 1} ${y1 - 1}h2v2h-2z`} stroke="#e00000" />
    </g>
  );
}

function Model() {
  return (
    <svg viewBox="0 0 668 809" preserveAspectRatio="xMinYMin slice" shapeRendering="crispEdges" className="absolute inset-0 w-full h-full" aria-label="Shear check model">
      {/* walls and columns below the slab */}
      <g stroke="#f4f000" strokeWidth="1">
        <path d="M236 479L254 487L311 554L370 544V652L236 492z" fill="#dcdcc0" />
        <path d="M108 504L236 479V597L107 622V560z" fill="#ededbf" />
        <path d="M108 504L236 479V565L162 578z" fill="#d3cf6e" />
        <path d="M122 501L176 490V522L131 532z" fill="#c6bd45" />
        <path d="M80 589L164 573V690L156 686z" fill="#dcdcc0" />
        <path d="M107 583L164 573V611L107 622z" fill="#cfcb80" />
        <path d="M14 597H43V714L18 718L14 716z" fill="#ededbf" />
        <path d="M18 600V717M39 594V711L43 714M39 711L14 716" fill="none" />
        <path d="M585 488H616V607L590 611L585 608z" fill="#ededbf" />
        <path d="M590 490V611M612 486V604L616 607M612 604L588 609" fill="none" />
        <path d="M242 489L374 645M364 540V648M372 536V652M156 578V688M164 573V689" fill="none" />
        <path d="M206 487V562M230 481V600M237 479V597L109 625M107 618L232 594" fill="none" />
      </g>
      <g stroke="#222" fill="none" strokeWidth="1">
        <path d="M24 597V716M600 480V604M160 574V691M368 534V650M238 492L368 650M80 589L160 690" />
        <path d="M107 583V622L236 597" strokeWidth="1.500" />
        <path d="M236 479V597M230 481V599M206 487V560" />
        <path d="M168 493V527M176 491V522L131 530" />
      </g>
      <g stroke="#a0761a" fill="none">{SUPPORTS_BACK.map(([x, y], i) => <Support key={i} x={x} y={y} />)}</g>
      <path d="M217 506l13-3M193 538l12-2M217 577l13-2" stroke="#d03010" strokeWidth="2" />

      {/* slab side faces */}
      <path d="M0 580L16 600L162 572V581L16 609L0 589z" fill="#e0dba8" />
      <path d="M309 544L622 484V493L309 554z" fill="#ededc4" />
      <path d="M595 452L668 438V447L600 461z" fill="#ededc4" />
      <path d="M108 504L254 476V487L116 514z" fill="#b5a83a" opacity="0.700" />
      <path d="M254 476L309 544V554L254 486z" fill="#c9c9a8" />

      <polygon points={SLAB} fill="#00ff00" />
      <path
        stroke="#28e800"
        d="M408 123h47M322 142h76M228 161h68M322 161h230M228 180h50M320 180h75M415 180h90M294 199h98M410 199h5M0 245h24M235 245h14M580 245h26M0 264h14M200 264h26M360 264h26M590 264h20M20 283h12M236 283h24M300 283h70M440 283h34M555 283h80M10 302h55M74 302h68M188 302h22M424 302h44M60 321h52M124 321h68M270 321h40M36 340h98M160 340h60M220 340h90M0 359h18M26 359h40M258 359h10M224 378h8M104 386h6M0 425h60M206 405h10M172 424h30M300 424h36M423 424h40M68 443h20M42 462h36M140 462h18M30 481h70M150 481h20M8 500h56M60 519h50M54 565h8"
      />

      {/* overstressed areas */}
      <g fill="#ff0000" stroke="#000">
        <path d="M75 494L89 482L114 486L107 501z" />
        <path d="M117 503L127 489L165 494z" />
        <path d="M294 525L321 520L337 524L339 538L311 544z" fill="#f02800" />
        <path d="M587 470L600 461L614 479L607 482z" />
        <path d="M575 493L585 480L616 486z" />
        <path d="M310 297L314 293L323 294L318 299z" />
        <path d="M330 324L335 318L347 320L341 327z" />
        <path d="M498 106L502 98L514 109z" />
        <path d="M299 312h2v1h-2z" fill="#000" />
      </g>
      <path d="M0 548L120 525M272 496L668 421" stroke="#ff0000" strokeWidth="1.500" />

      {STRIPS.map((p, i) => <Strip key={i} p={p} />)}
      <Strip p={[108, 504, 236, 479]} />

      {/* beam across the opening */}
      <path d="M158 557L366 517L372 538L163 580z" fill="#dcd860" fillOpacity="0.400" stroke="#ff0" />
      <path d="M158 563L370 522M164 573L370 532M158 557V575" stroke="#ff0" fill="none" />
      <path d="M163 568L370 530" stroke="#332" strokeWidth="1.500" />

      {/* slab outline */}
      <path d="M0 186L498 91L668 300M668 438L595 452L618 480M622 484L309 544L254 476L108 504L162 572L16 600L0 580" stroke="#000" fill="none" />
      <g stroke="#ff00ff" strokeWidth="2" strokeDasharray="2 2" fill="none">
        <path d="M0 187L498 92L668 302" />
        <path d="M0 196L500 101L668 310" stroke="#b840b8" />
        <path d="M668 439L595 453L622 485L309 545L254 477L108 505L162 573L16 601L0 581" />
        <path d="M668 448L600 462M622 484V494L309 554L254 486L116 514L108 505M162 572V581L16 609L0 589M16 600V609M309 544V554M254 476V486" />
      </g>

      {/* nodes with local axes */}
      {MARKS.map(([x, y], i) => (
        <g key={i} fill="none">
          {i < 5 && <path d={i % 3 === 0 ? `M${x - 10} ${y - 6}l9-2l11 11l-9 4z` : `M${x - 15} ${y + 2}l24-6l4 6l-24 6z`} stroke="#ff0" />}
          {i === 5 && <path d={`M${x} ${y + 3}q-18-7-12-14q10-3 14 8z`} stroke="#ff0" />}
          <path d={`M${x + 8} ${y - 6}L${x} ${y}L${x + 10} ${y + 5}M${x + 1} ${y}h4`} stroke="#e00000" strokeWidth="1.500" />
        </g>
      ))}
      <g stroke="#804c44" fill="none">{SUPPORTS.map(([x, y], i) => <Support key={i} x={x} y={y} />)}</g>
      <path d="M161 690v12M161 690l4 6M368 652v11M368 652l5 6M23 714h2v2h-2zM599 604h2v2h-2z" stroke="#f00000" fill="none" strokeWidth="1.500" />

      {/* global axes */}
      <g fill="none">
        <path d="M38 738v26" stroke="#0000d0" />
        <path d="M38 764l15-12" stroke="#00d000" />
        <path d="M38 764l23 8" stroke="#f00000" />
      </g>
      <g className="text-[9px] font-sans">
        <text x="39" y="746" fill="#0000d0">Z</text>
        <text x="54" y="760" fill="#00d000">Y</text>
        <text x="62" y="781" fill="#f00000">X</text>
      </g>
    </svg>
  );
}

function InfoTab() {
  return (
    <span className="w-2.5 h-5 bg-[#c4c4c4] flex flex-col items-center justify-between pb-0.5">
      <span className="leading-[12px] font-bold text-[#008080] font-['DejaVu_Sans_Mono',monospace]">i</span>
      <span className="border-x-4 border-x-transparent border-b-4 border-b-[#f00000]" />
    </span>
  );
}

function Legend() {
  return (
    <div className="absolute right-[19px] top-2.5 w-[98px] h-[152px] border border-black flex pt-2.5">
      <div className="w-[42px] pt-[51px] text-right text-[10px] leading-[21px]">
        <div>1.00</div>
        <div>0.00</div>
      </div>
      <div className="ml-2 mt-10 w-4 h-16 border border-black flex flex-col shrink-0">
        <span className="flex-1 bg-[#ff0000] border-b border-black" />
        <span className="flex-1 bg-[#00ff00] border-b border-black" />
        <span className="flex-1 bg-[#c4c4c4]" />
      </div>
      <span className="[writing-mode:vertical-rl] rotate-180 h-10 ml-2 text-[13px] leading-[16px] font-bold whitespace-nowrap">UC [-]</span>
    </div>
  );
}

const WHEEL_V = 'bg-[repeating-linear-gradient(#000_0_2px,#8a8a8a_2px_4px)]';
const WHEEL_H = 'bg-[repeating-linear-gradient(90deg,#000_0_1px,#8a8a8a_1px_2px)]';

const VIEW_BUTTONS = '*box boxY _ *supp load *label _ node member _ *dots _ list _ winY winR meshR';

function ModelView() {
  return (
    <section className="flex flex-col min-w-0 border-2 border-[#8a8a8a] border-r-white border-b-white bg-white">
      <div className="flex-1 flex min-h-0">
        <div className="flex-1 relative overflow-hidden font-['DejaVu_Sans_Condensed','DejaVu_Sans',sans-serif]">
          <Model />
          <div className="absolute left-0 top-0"><InfoTab /></div>
          <div className="absolute right-0 top-0"><InfoTab /></div>
          <div className="absolute left-5 top-[11px] w-[236px] text-[12px] leading-4">
            <h1 className="font-bold">SFRC&nbsp; 2D&nbsp; Shear&nbsp;check</h1>
            <p>Values: <b>UC</b></p>
            <p>Linear calculation</p>
            <p>Combination:&nbsp; CO1</p>
            <p>Extreme: Global</p>
            <p>Selection: All</p>
            <p>Location:&nbsp; In&nbsp; nodes&nbsp; avg..&nbsp; System: LCS mesh element</p>
          </div>
          <Legend />
        </div>
        <div className="w-[17px] bg-[#f0f0f0] flex flex-col shrink-0">
          <Chevron dir="up" />
          <span className="h-[283px]" />
          <span className="h-[17px] bg-[#cdcdcd]" />
          <span className="flex-1" />
          <Chevron dir="down" />
          <span className="h-[139px] border border-black bg-[#707070] p-[3px]"><span className={`block h-full ${WHEEL_V}`} /></span>
        </div>
      </div>
      <div className="h-[21px] flex items-center bg-[#f0f0f0] shrink-0">
        {VIEW_BUTTONS.split(' ').map((n, i) =>
          n === '_' ? <span key={i} className="w-[3px]" /> : (
            <button
              key={i}
              type="button"
              aria-label={n.replace('*', '')}
              className={`w-[21px] h-5 mr-px flex items-center justify-center border-2 shrink-0 ${
                n.startsWith('*') ? 'border-[#a8a8a8] border-r-white border-b-white bg-linear-to-b from-[#fcb565] to-[#fff0a8]' : 'border-[#e8e8e8] border-r-[#9a9a9a] border-b-[#9a9a9a] bg-linear-to-b from-[#e4e6ea] to-[#a9afb9]'
              }`}
            >
              <Icon shapes={ICONS[n.replace('*', '')]} />
            </button>
          )
        )}
        <Chevron dir="left" />
        <span className="flex-1" />
        <span className="w-[17px] h-full bg-[#cdcdcd]" />
        <span className="w-9" />
        <Chevron dir="right" />
        <span className="w-[46px] h-full border border-black bg-[#707070] p-[3px]"><span className={`block h-full ${WHEEL_H}`} /></span>
        <span className="w-[51px] h-full ml-0.5 mr-[17px] border border-black bg-[#707070] p-[3px]"><span className={`block h-full ${WHEEL_H}`} /></span>
      </div>
    </section>
  );
}

const Sub = ({ children }: { children: ReactNode }) => <span className="text-[9px] relative top-0.5">{children}</span>;

const COLS: { w: string; head: ReactNode[]; cell: string[]; right?: boolean }[] = [
  { w: 'w-[54px]', head: ['Name'], cell: ['S2'] },
  { w: 'w-[75px]', head: ['Mesh'], cell: ['Node: 259'] },
  { w: 'w-[68px]', head: ['Position', '[m]'], cell: ['100.748', '-50.586', '0.000'], right: true },
  { w: 'w-[53px]', head: ['Case'], cell: ['CO1/1'] },
  { w: 'w-[77px]', head: ['Reinf.', '[ mm²/m]', 'h', '[ mm]'], cell: ['494/524', '225'] },
  { w: 'w-[81px]', head: ['Fibre type', 'Dosage', '[kg/m³]'], cell: ['5D65/60BG', '30.0'] },
  { w: 'w-[77px]', head: [<>m<Sub>Ed</Sub></>, '[ kNm/m ]', <>n<Sub>Ed</Sub></>, '[ kN/m ]'], cell: ['-48.9', '898.5'], right: true },
  { w: 'w-[66px]', head: [<>v<Sub>Ed</Sub></>, '[ kN/m ]'], cell: ['326.5'], right: true },
  { w: 'w-[65px]', head: [<>v<Sub>Rd,c</Sub></>, '[ kN/m ]', <>v<Sub>Rd,cf</Sub></>, '[ kN/m ]'], cell: ['2.2', '117.3'], right: true },
  { w: 'w-[65px]', head: [<>v<sup className="text-[8px] leading-none">f</sup><Sub>Rd,cf</Sub></>, '[ kN/m ]', <>v<Sub>Rd,max</Sub></>, '[ kN/m ]'], cell: ['3.0', '1061.6'], right: true },
  { w: 'w-[62px]', head: ['UC', '[-]', 'Check'], cell: ['108.24', 'NOT OK'] },
  { w: 'w-[79px]', head: ['Errors,', 'warnings,', 'notes'], cell: ['W6/F7'] },
];

function SmallTable({ head, row, widths }: { head: string[]; row: string[]; widths: string[] }) {
  return (
    <table className="mt-2 table-fixed border-collapse leading-[14px]">
      <thead>
        <tr className="bg-[#808080] text-white">
          {head.map((h, i) => <th key={h} className={`${widths[i]} border border-black`}>{h}</th>)}
        </tr>
      </thead>
      <tbody>
        <tr>
          <td className="border border-black pl-[3px] bg-[#dcdcdc]">{row[0]}</td>
          <td className="border border-black pl-1.5">{row[1]}</td>
        </tr>
      </tbody>
    </table>
  );
}

function ZoomBar() {
  return (
    <div className="w-[257px] flex items-center border-l-2 border-black pl-1.5 bg-linear-to-b from-[#b4b4b4] via-[#707478] to-[#5c6064]">
      <span className="flex h-full mt-1 rounded-t-sm bg-linear-to-b from-[#d4dede] to-[#b4c0c0]"><Tools names="fitAll fitW" /></span>
      <span className="w-[94px] pl-2.5 text-[12px]">116%</span>
      <button type="button" aria-label="Zoom out" className="w-4 h-4 rounded-full border-2 border-[#ddd] bg-[#888] flex items-center justify-center"><span className="w-2 h-0.5 bg-white" /></button>
      <input type="range" aria-label="Zoom" defaultValue={33} className="flex-1 min-w-0 ml-1.5 h-0.5 bg-[#e0e0e0] appearance-none [&::-webkit-slider-thumb]:appearance-none [&::-webkit-slider-thumb]:w-2.5 [&::-webkit-slider-thumb]:h-3 [&::-webkit-slider-thumb]:rounded-b-full [&::-webkit-slider-thumb]:border-2 [&::-webkit-slider-thumb]:border-white [&::-webkit-slider-thumb]:bg-[#777]" />
    </div>
  );
}

function Report() {
  return (
    <section className="flex flex-col min-w-0 overflow-hidden">
      <PanelHeader title="Report preview" tools={false} />
      <div className="h-6 shrink-0 flex items-center pl-[3px] gap-px bg-linear-to-b from-[#cdd0d7] to-[#979da8] border-b border-[#8a909a]">
        <Tools names="gear printB printG export" />
        <Select label="Template" options={['Default']} className="w-[196px] h-[21px]" />
        <Tools names="| fitAll fitW page | tableI | refresh" />
      </div>
      <div className="flex-1 min-h-0 bg-white border-l border-black pl-[43px] pt-[21px] font-['DejaVu_Sans_Condensed','DejaVu_Sans',sans-serif] text-[12px] leading-[15px]">
        <h1 className="text-[19px] leading-[27px] font-bold"><span className="bg-[#f4f4ff]">SFRC 2D Shear check</span></h1>
        <div className="mt-[3px]">
          <p>Linear&nbsp; calculation</p>
          <p>Combination:&nbsp; CO1</p>
          <p>Extreme: Global</p>
          <p>Selection: All</p>
          <p>Location:&nbsp; In&nbsp;nodes&nbsp; avg.. System:&nbsp; LCS&nbsp; mesh element</p>
          <p>There are&nbsp; 1 warnings&nbsp; on selected&nbsp; members.&nbsp; 1 of them are&nbsp; shown.</p>
          <h2 className="font-bold">Shear check</h2>
        </div>
        <table className="mt-2.5 w-[823px] table-fixed border-collapse">
          <thead>
            <tr className="h-[61px] bg-[#808080] text-white align-top">
              {COLS.map((c, i) => (
                <th key={i} className={`${c.w} border border-black whitespace-nowrap`}>
                  {c.head.map((h, j) => <div key={j} className="h-[15px] leading-[15px]">{h}</div>)}
                </th>
              ))}
            </tr>
          </thead>
          <tbody>
            <tr className="h-[47px] align-top">
              {COLS.map((c, i) => (
                <td key={i} className={`border border-black whitespace-nowrap ${c.right ? 'text-right pr-1' : 'pl-[3px]'}`}>
                  {c.cell.map(t => <div key={t}>{t}</div>)}
                </td>
              ))}
            </tr>
          </tbody>
        </table>
        <SmallTable head={['Name', 'Combination key']} row={['CO1/1', 'SelfWeight + dead']} widths={['w-[54px]', 'w-[126px]']} />
        <SmallTable head={['E/W/N', 'Present on members']} row={['W6/F7', 'S2']} widths={['w-[63px]', 'w-[148px]']} />
      </div>
      <div className="h-[17px] shrink-0 flex items-center bg-[#f0f0f0]">
        <Chevron dir="left" />
        <span className="flex-1 h-[13px] bg-[#cdcdcd]" />
      </div>
      <div className="h-[21px] shrink-0 flex bg-linear-to-b from-[#44474f] via-[#2c2c2c] to-[#333] text-white">
        <span className="flex-1 pl-[22px] flex items-center">Tasks</span>
        <ZoomBar />
      </div>
    </section>
  );
}

function CommandLine() {
  return (
    <section className="shrink-0 h-20 flex flex-col overflow-hidden">
      <PanelHeader title="Command line" tools={false} />
      <div className="h-6 mt-px shrink-0 flex justify-between">
        <div className="flex pr-px bg-linear-to-b from-[#cdd0d7] to-[#979da8]">
          <span className="pl-0.5 pr-1 border-r border-white flex"><ToolButton shapes={ICONS.pointer} label="Select" /></span>
          <ToolButton shapes={ICONS.edit} label="Edit" />
          {DIMS.map((d, i) => <ToolButton key={i} shapes={d} label={`Dimension ${i + 1}`} />)}
        </div>
        <div className="w-[449px] overflow-hidden flex border-l border-t border-white bg-linear-to-b from-[#cdd0d7] to-[#979da8] pl-0.5">
          {SNAPS.map((s, i) => <ToolButton key={i} shapes={s} label={`Point ${i + 1}`} />)}
          <Sep />
          {SNAPS2.map((s, i) => <ToolButton key={i} shapes={s} label={`Line ${i + 1}`} />)}
          <Sep />
          <ToolButton shapes={SNAP_SET} label="Snap settings" />
          <span className="w-1 border-l border-white ml-0.5" />
          {SNAPS3.map((s, i) => <ToolButton key={i} shapes={s} label={`Snap ${i + 1}`} on={i === 0 || i === 3} />)}
        </div>
      </div>
      <label className="mt-[13px] ml-2 h-[19px] shrink-0 flex items-center pl-1 bg-white border-t-2 border-l border-black">
        Command &gt;
        <input className="flex-1 ml-1 outline-none" />
      </label>
    </section>
  );
}

export default function App() {
  return (
    <div className="h-screen flex flex-col overflow-hidden bg-[#535353] text-black font-['Noto_Sans','Open_Sans',sans-serif] text-[11px] leading-4">
      <header className="h-[23px] shrink-0 flex items-center bg-white pl-1 pr-[28px]">
        <Icon shapes={ICONS.app} />
        <span className="ml-[3px] flex-1">SCIA Engineer 15.016.1104 - [SFRC_PUNCH_Design_UserProject_Dylon.esa : 1]</span>
        <button type="button" aria-label="Minimize" className="mr-[34px]"><span className="block w-2.5 h-px bg-black" /></button>
        <button type="button" aria-label="Restore">
          <svg viewBox="0 0 11 11" fill="none" stroke="#000" className="w-[11px] h-[11px]"><path d="M.5 2.500h8v8h-8zM2.500 2.500v-2h8v8h-2" /></svg>
        </button>
      </header>

      <nav className="h-[25px] shrink-0 flex items-center text-white">
        <Grip />
        <span className="w-[27px] flex"><Icon shapes={ICONS.doc} /></span>
        <div className="flex gap-[15px]">
          {MENU.map(m => <button key={m} type="button">{m}</button>)}
        </div>
        <span className="flex-1" />
        <svg viewBox="0 0 16 16" className="w-4 h-4 mr-[18px]" aria-hidden="true">
          <circle cx="8" cy="8" r="7" fill="#ffd400" stroke="#000" />
          <path d="M6 4v3M10 4v3M4 9q4 5 8 0" stroke="#000" fill="none" />
        </svg>
        <Select label="Search in WebHelp" options={['Search in WebHelp']} className="w-[146px] h-[19px] text-[#606060]" />
        <span className="w-[7px] h-0.5 bg-[#9aa2b0] ml-1.5 self-end mb-1.5" />
      </nav>

      <div className="shrink-0 flex pl-px">
        <Bar handle={false}>
          <Tools names="new open cabinet save | undo redo | form |" />
          <Select label="Project" options={['SFRC_PUNCH_Design_U']} className="w-[145px] h-[21px] ml-0.5 mr-2.5" />
        </Bar>
        <span className="w-[3px]" />
        <Bar><Tools names="sheets beam paste coil mill | print plot calc gallery" /></Bar>
        <span className="w-2" />
        <Bar><Tools names="arrows caseFind measure" /></Bar>
        <span className="w-1" />
        <Bar><Tools names="cubeX cubeY cubeZ cubeA ucs zoomIn zoomOut zoomWin zoomAll zoomSel light | viewUndo viewRedo" /></Bar>
        <span className="w-[13px]" />
        <Bar><Tools names="*frame1 frame2 frame3 *frame4 frame5 frame6 frame7" /></Bar>
      </div>
      <div className="shrink-0 flex pl-px mt-1 mb-[3px]">
        <Bar wide><Tools names="copyMove copyMulti copyBlue rotate mirror cut explode stretch | layAdd laySub" /></Bar>
        <span className="w-[14px]" />
        <Bar>
          <Spin label="Scale" value="1" />
          <span className="px-0.5 h-full"><Tools names="dimA" /></span>
          <Spin label="Size" value="4" />
          <span className="px-0.5 h-full"><Tools names="dimB" /></span>
        </Bar>
        <span className="w-[3px]" />
        <Bar><Tools names="truss trussL trussU trussX *trussY target | saveR openR filtA filtB" /></Bar>
      </div>

      <main className="flex-1 min-h-0 flex gap-[7px] pb-0.5">
        <aside className="w-[308px] shrink-0 flex flex-col gap-2">
          <TreePanel />
          <PropertiesPanel />
        </aside>
        <div className="flex-1 min-w-0 flex flex-col gap-1.5">
          <div className="flex-1 min-h-0 grid grid-cols-[689fr_872fr] grid-rows-[minmax(0,1fr)] gap-1.5">
            <ModelView />
            <Report />
          </div>
          <CommandLine />
        </div>
      </main>
    </div>
  );
}
